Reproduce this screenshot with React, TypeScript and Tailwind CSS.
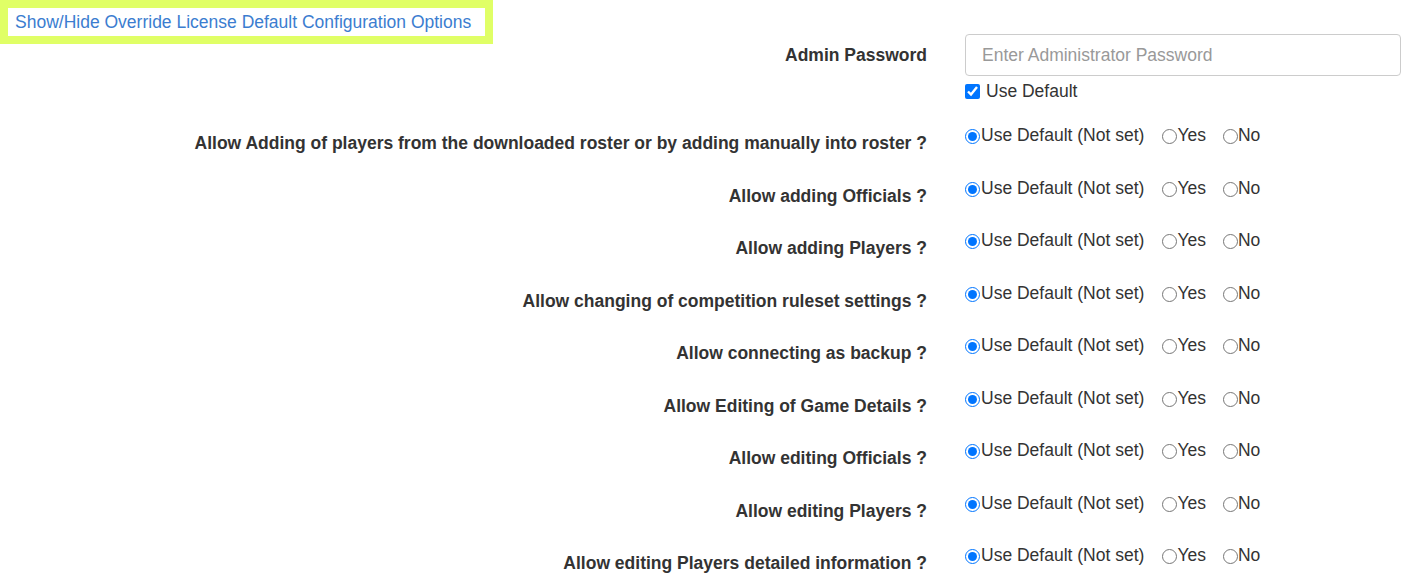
import React from "react"

const permissions = [
  "Allow Adding of players from the downloaded roster or by adding manually into roster ?",
  "Allow adding Officials ?",
  "Allow adding Players ?",
  "Allow changing of competition ruleset settings ?",
  "Allow connecting as backup ?",
  "Allow Editing of Game Details ?",
  "Allow editing Officials ?",
  "Allow editing Players ?",
  "Allow editing Players detailed information ?",
]

function OverrideRow({ label, name }: { label: string; name: string }) {
  return (
    <div className="grid grid-cols-[927px_1fr] gap-x-[38px] h-[52.5px]">
      <div className="text-right font-bold pt-[8px] leading-[20px]">{label}</div>
      <div className="flex items-start leading-[20px]">
        <label className="flex items-center">
          <input type="radio" name={name} defaultChecked className="m-0 mr-[1px] w-[15px] h-[15px] mt-[3px]" />
          Use Default (Not set)
        </label>
        <label className="flex items-center ml-[18px]">
          <input type="radio" name={name} className="m-0 w-[15px] h-[15px] mt-[3px]" />
          Yes
        </label>
        <label className="flex items-center ml-[17px]">
          <input type="radio" name={name} className="m-0 w-[15px] h-[15px] mt-[3px]" />
          No
        </label>
      </div>
    </div>
  )
}

export default function App() {
  return (
    <div className="bg-white text-[#333] text-[17.5px] font-['Liberation_Sans',Arial,sans-serif] w-[1409px] h-[577px] overflow-hidden">
      <div className="h-[34px]">
        <a
          href="#"
          className="inline-block mt-[8px] ml-[8px] h-[28px] leading-[28px] px-[7px] w-[477px] bg-white text-[#3b7dd0] outline-8 outline-solid outline-[#e0ff66]"
        >
          Show/Hide Override License Default Configuration Options
        </a>
      </div>

      <div className="grid grid-cols-[927px_1fr] gap-x-[38px] pr-[8px]">
        <div className="text-right font-bold leading-[42px]">Admin Password</div>
        <div>
          <input
            type="password"
            placeholder="Enter Administrator Password"
            className="w-full h-[42px] border border-[#ccc] rounded-[4px] px-[16px] placeholder:text-[#999] outline-none"
          />
          <label className="flex items-center mt-[5px] leading-[20px]">
            <input type="checkbox" defaultChecked className="m-0 mr-[6px] w-[15px] h-[15px]" />
            Use Default
          </label>
        </div>
      </div>

      <div className="mt-[24px]">
        {permissions.map((p, i) => (
          <OverrideRow key={p} label={p} name={`perm-${i}`} />
        ))}
      </div>
    </div>
  )
}
